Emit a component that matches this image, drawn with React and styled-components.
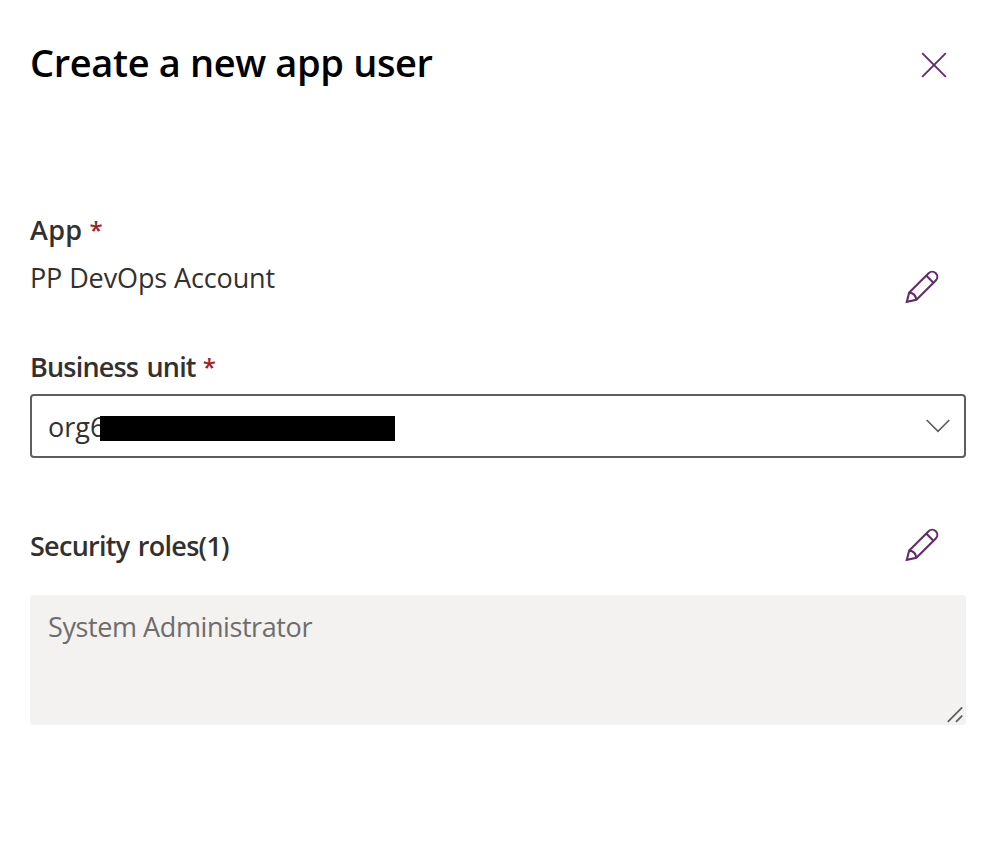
import React from "react";
import styled, { createGlobalStyle } from "styled-components";

const GlobalStyle = createGlobalStyle`
  * { box-sizing: border-box; }
  body { margin: 0; background: #fff; }
`;

const Panel = styled.main`
  display: flex;
  flex-direction: column;
  width: 990px;
  height: 854px;
  padding: 34px 24px 0 30px;
  background: #fff;
  color: #323130;
  font-family: "Open Sans", "Noto Sans", sans-serif;
  font-size: 27px;
  line-height: 40px;
`;

const Header = styled.header`
  display: flex;
  justify-content: space-between;
  align-items: flex-start;
  height: 56px;
  padding-right: 19px;
  margin-bottom: 120px;
`;

const Title = styled.h1`
  margin: 0;
  color: #000;
  font-size: 38px;
  font-weight: 600;
  line-height: 56px;
  letter-spacing: -0.36px;
  white-space: nowrap;
`;

const IconButton = styled.button`
  display: flex;
  padding: 0;
  border: 0;
  background: none;
  color: #632d6b;
  margin-top: ${(p) => p.$top}px;
`;

const Label = styled.div`
  display: flex;
  height: 40px;
  font-weight: 600;
  white-space: nowrap;
  letter-spacing: ${(p) => p.$tracking}px;
  word-spacing: 2px;
`;

const Required = styled.span`
  margin-left: 7px;
  color: #a4201c;
  font-size: 24px;
  font-weight: 600;
  line-height: 39px;
`;

const Row = styled.div`
  display: flex;
  justify-content: space-between;
  align-items: flex-start;
  height: ${(p) => p.$height}px;
  padding-right: 27px;
`;

const Text = styled.span`
  white-space: nowrap;
  letter-spacing: ${(p) => p.$tracking}px;
`;

const AppName = styled(Text)`
  margin-top: 8px;
`;

const Select = styled.div`
  display: flex;
  align-items: center;
  height: 64px;
  margin-top: 7px;
  margin-bottom: 68px;
  padding: 0 14px 0 16px;
  border: 2px solid #605e5c;
  border-radius: 4px;
`;

const SelectValue = styled.div`
  display: grid;
  grid-template-columns: 52px 295px;
  align-items: center;
  flex: 1;
  padding-top: 2px;
`;

const Redaction = styled.span`
  height: 25px;
  margin-top: 2px;
  background: #000;
  z-index: 1;
`;

const RolesBox = styled.div`
  display: flex;
  justify-content: space-between;
  height: 130px;
  padding: 12px 3px 2px 18px;
  border-radius: 4px;
  background: #f3f2f1;
  color: #6f6d6b;
`;

const Grip = styled.svg`
  align-self: flex-end;
`;

function Pencil() {
  return (
    <svg width="34" height="34" viewBox="0 0 34 34" fill="none" stroke="currentColor" strokeWidth="2.1">
      <path d="M1.8 31.8 L4.2 22.6 L23.6 3.2 A5 5 0 0 1 30.8 10.4 L11.4 29.8 Z" />
      <path d="M21.2 5.6 L28.4 12.8 M4.2 22.6 C8 22.8 10.8 25.8 11.4 29.8" />
    </svg>
  );
}

export default function App() {
  return (
    <>
      <GlobalStyle />
      <Panel>
        <Header>
          <Title>Create a new app user</Title>
          <IconButton $top={18} aria-label="Close">
            <svg width="26" height="26" viewBox="0 0 26 26" fill="none" stroke="currentColor" strokeWidth="1.9">
              <path d="M1.2 1.2 L24.8 24.8 M24.8 1.2 L1.2 24.8" />
            </svg>
          </IconButton>
        </Header>
        <Label $tracking={0.3}>App<Required>*</Required></Label>
        <Row $height={97}>
          <AppName $tracking={-0.12}>PP DevOps Account</AppName>
          <IconButton $top={20} aria-label="Edit app"><Pencil /></IconButton>
        </Row>
        <Label $tracking={-0.8}>Business unit<Required>*</Required></Label>
        <Select>
          <SelectValue>
            <Text $tracking={0}>org6</Text>
            <Redaction />
          </SelectValue>
          <svg width="24" height="14" viewBox="0 0 24 14" fill="none" stroke="#605e5c" strokeWidth="1.7">
            <path d="M0.7 1 L12 12.3 L23.3 1" />
          </svg>
        </Select>
        <Row $height={69}>
          <Label $tracking={-0.72}>Security roles(1)</Label>
          <IconButton $top={2} aria-label="Edit security roles"><Pencil /></IconButton>
        </Row>
        <RolesBox>
          <Text $tracking={-0.41}>System Administrator</Text>
          <Grip width="16" height="16" viewBox="0 0 16 16" fill="none" stroke="#605e5c" strokeWidth="1.8">
            <path d="M0.8 14.8 L15.2 0.4 M9 14.8 L15.2 8.6" />
          </Grip>
        </RolesBox>
      </Panel>
    </>
  );
}
